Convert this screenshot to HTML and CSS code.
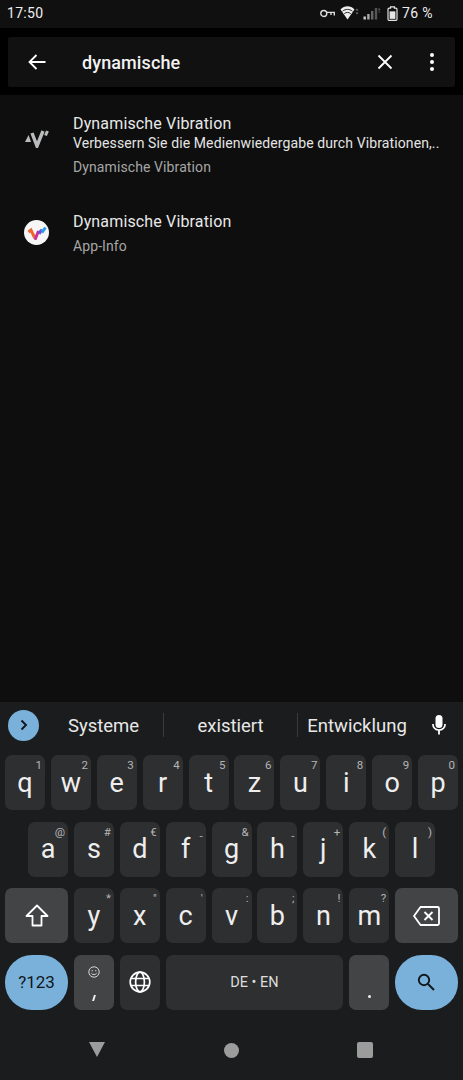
FILE: index.html
```html
<!DOCTYPE html>
<html lang="de">
<head>
    <meta charset="UTF-8" />
    <meta name="viewport" content="width=device-width, initial-scale=1.0" />
    <title>Einstellungen suchen</title>
    <link rel="stylesheet" href="styles.css">
</head>
<body>
    <div class="status-bar">
        <span class="clock">17:50</span>
        <div class="status-icons">
            <svg class="icon-key" width="15" height="9" viewBox="0 0 15 9" fill="none" stroke="#ddd" stroke-width="1.4">
                <circle cx="3.8" cy="4.5" r="3"/>
                <path d="M6.8 3.4H14.3V6.6M11 3.4V6"/>
            </svg>
            <svg class="icon-wifi" width="19" height="14" viewBox="0 0 19 14">
                <path d="M0.5 3.5C4.5-0.8 10.5-0.8 14.5 3.5L7.5 13.5Z" fill="#eee"/>
                <path d="M2.6 5.2C5.5 2.8 9.5 2.8 12.4 5.2M4.3 7.6C6.2 6 8.8 6 10.7 7.6" stroke="#111" stroke-width="0.9" fill="none"/>
                <path d="M17 2.5L18.5 4.5H15.5ZM17 8.5L18.5 6.5H15.5Z" fill="#777"/>
            </svg>
            <svg class="icon-signal" width="18" height="13" viewBox="0 0 18 13">
                <rect x="0.5" y="9.5" width="2.4" height="3" fill="#ccc"/>
                <rect x="4.2" y="7" width="2.4" height="5.5" fill="#aaa"/>
                <rect x="8" y="4" width="2.4" height="8.5" fill="#666"/>
                <rect x="11.8" y="1" width="2.4" height="11.5" fill="#555"/>
                <path d="M16.2 1.5V6M15.2 3L16.2 1.5L17.2 3" stroke="#555" stroke-width="0.8" fill="none"/>
            </svg>
            <svg class="icon-battery" width="11" height="15" viewBox="0 0 10 14">
                <path d="M3.2 0.8H6.8V2H8.2Q9.2 2 9.2 3V12.4Q9.2 13.4 8.2 13.4H1.8Q0.8 13.4 0.8 12.4V3Q0.8 2 1.8 2H3.2Z" fill="none" stroke="#e6e6e6" stroke-width="1.1"/>
                <rect x="2.3" y="5" width="5.4" height="7" fill="#e6e6e6"/>
            </svg>
            <span class="battery-text">76 %</span>
        </div>
    </div>

    <div class="search-wrap">
        <div class="search-box">
            <svg class="search-back" width="18" height="16" viewBox="0 0 18 16" fill="none" stroke="#fff" stroke-width="1.8">
                <path d="M17.5 8H1.5M8.5 1L1.5 8L8.5 15"/>
            </svg>
            <span class="search-text">dynamische</span>
            <svg class="search-clear" width="16" height="16" viewBox="0 0 16 16" fill="none" stroke="#fff" stroke-width="1.8">
                <path d="M1.5 1.5L14.5 14.5M14.5 1.5L1.5 14.5"/>
            </svg>
            <div class="search-more"><span></span><span></span><span></span></div>
        </div>
    </div>

    <div class="results">
        <div class="result result-first">
            <div class="result-icon">
                <svg width="26" height="19" viewBox="0 0 26 19" fill="none" stroke="#b9bbbd">
                    <path d="M1 13L4.6 6L7 13Z" fill="#b9bbbd" stroke="none"/>
                    <path d="M8 4L13 17L19 2" stroke-width="3.4"/>
                    <path d="M21.5 6.5L23.5 2" stroke-width="3"/>
                </svg>
            </div>
            <div class="result-text">
                <div class="result-title">Dynamische Vibration</div>
                <div class="result-desc">Verbessern Sie die Medienwiedergabe durch Vibrationen,..</div>
                <div class="result-path">Dynamische Vibration</div>
            </div>
        </div>
        <div class="result result-second">
            <div class="result-icon">
                <div class="app-logo">
                    <svg width="20" height="14" viewBox="0 0 20 14" fill="none" stroke-width="3">
                        <path d="M1.5 6L4 4L7.5 11.5" stroke="#f0642d"/>
                        <path d="M7.5 11.5L8.5 12.5L11.5 5" stroke="#c6339a"/>
                        <path d="M11.5 5L13 6.5L15 3.5" stroke="#6a4fd8"/>
                        <path d="M15 3.5L16 5L18.5 1.5" stroke="#2b9cf0"/>
                    </svg>
                </div>
            </div>
            <div class="result-text">
                <div class="result-title">Dynamische Vibration</div>
                <div class="result-path result-path-app">App-Info</div>
            </div>
        </div>
    </div>

    <div class="keyboard">
        <div class="suggestions">
            <div class="expand-btn">
                <svg width="8" height="12" viewBox="0 0 8 12" fill="none" stroke="#10171c" stroke-width="1.9">
                    <path d="M1.5 1.5L6 6L1.5 10.5"/>
                </svg>
            </div>
            <span class="word word-1">Systeme</span>
            <span class="word-sep"></span>
            <span class="word word-2">existiert</span>
            <span class="word-sep"></span>
            <span class="word word-3">Entwicklung</span>
            <svg class="mic" width="14" height="20" viewBox="0 0 14 20" fill="none" stroke="#fff">
                <rect x="3.5" y="0" width="7" height="13" rx="3.5" fill="#fff" stroke="none"/>
                <path d="M0.9 9C0.9 12.6 3.6 15 7 15C10.4 15 13.1 12.6 13.1 9" stroke-width="1.7"/>
                <path d="M7 15V19.5" stroke-width="1.8"/>
            </svg>
        </div>

        <div class="key-row">
            <div class="key"><span class="hint">1</span>q</div>
            <div class="key"><span class="hint">2</span>w</div>
            <div class="key"><span class="hint">3</span>e</div>
            <div class="key"><span class="hint">4</span>r</div>
            <div class="key"><span class="hint">5</span>t</div>
            <div class="key"><span class="hint">6</span>z</div>
            <div class="key"><span class="hint">7</span>u</div>
            <div class="key"><span class="hint">8</span>i</div>
            <div class="key"><span class="hint">9</span>o</div>
            <div class="key"><span class="hint">0</span>p</div>
        </div>

        <div class="key-row key-row-home">
            <div class="key"><span class="hint">@</span>a</div>
            <div class="key"><span class="hint">#</span>s</div>
            <div class="key"><span class="hint">€</span>d</div>
            <div class="key"><span class="hint hint-dash">-</span>f</div>
            <div class="key"><span class="hint">&amp;</span>g</div>
            <div class="key"><span class="hint hint-dash">-</span>h</div>
            <div class="key"><span class="hint">+</span>j</div>
            <div class="key"><span class="hint">(</span>k</div>
            <div class="key"><span class="hint">)</span>l</div>
        </div>

        <div class="key-row">
            <div class="key key-wide key-dark">
                <svg width="24" height="23" viewBox="0 0 24 23" fill="none" stroke="#fff" stroke-width="1.8">
                    <path d="M12 1.5L22.5 12H16.5V21.5H7.5V12H1.5Z" stroke-linejoin="round"/>
                </svg>
            </div>
            <div class="key"><span class="hint">*</span>y</div>
            <div class="key"><span class="hint">"</span>x</div>
            <div class="key"><span class="hint">'</span>c</div>
            <div class="key"><span class="hint">:</span>v</div>
            <div class="key"><span class="hint">;</span>b</div>
            <div class="key"><span class="hint">!</span>n</div>
            <div class="key"><span class="hint">?</span>m</div>
            <div class="key key-wide key-dark">
                <svg width="27" height="20" viewBox="0 0 27 20" fill="none" stroke="#fff" stroke-width="1.8">
                    <path d="M7.5 1H24.5Q26 1 26 2.5V17.5Q26 19 24.5 19H7.5L1 10Z" stroke-linejoin="round"/>
                    <path d="M11.5 6L19.5 14M19.5 6L11.5 14"/>
                </svg>
            </div>
        </div>

        <div class="key-row key-row-bottom">
            <div class="key key-wide key-action key-symbols">?123</div>
            <div class="key key-dark key-comma">
                <svg class="emoji" width="12" height="12" viewBox="0 0 12 12" fill="none" stroke="#e6e6e6" stroke-width="0.9">
                    <circle cx="6" cy="6" r="5.2"/>
                    <circle cx="4.2" cy="4.7" r="0.6" fill="#e6e6e6" stroke="none"/>
                    <circle cx="7.8" cy="4.7" r="0.6" fill="#e6e6e6" stroke="none"/>
                    <path d="M3.3 7.2C4.2 9 7.8 9 8.7 7.2"/>
                </svg>
                <span class="comma"></span>
            </div>
            <div class="key">
                <svg width="22" height="22" viewBox="0 0 22 22" fill="none" stroke="#fff" stroke-width="1.7">
                    <circle cx="11" cy="11" r="9.8"/>
                    <ellipse cx="11" cy="11" rx="4.4" ry="9.8"/>
                    <path d="M2 7.5H20M2 14.5H20"/>
                </svg>
            </div>
            <div class="key key-space">DE • EN</div>
            <div class="key key-dark key-period"><span class="dot"></span></div>
            <div class="key key-wide key-action">
                <svg width="18" height="18" viewBox="0 0 18 18" fill="none" stroke="#10171c" stroke-width="1.9">
                    <circle cx="7" cy="7" r="5.2"/>
                    <path d="M11 11L17 17"/>
                </svg>
            </div>
        </div>

        <div class="nav-bar">
            <span class="nav-back"></span>
            <span class="nav-home"></span>
            <span class="nav-recent"></span>
        </div>
    </div>
</body>
</html>
```

FILE: styles.css
```css
* {
    margin: 0;
    padding: 0;
    box-sizing: border-box;
}

body {
    font-family: Roboto, sans-serif;
    background-color: #0e0e0e;
    color: #fff;
    height: 1080px;
    overflow: hidden;
    display: flex;
    flex-direction: column;
}

.status-bar {
    height: 28px;
    background: #101010;
    display: flex;
    align-items: center;
    justify-content: space-between;
    padding: 0 30px 2px 7px;
    font-size: 14px;
    color: #eee;
}

.clock {
    letter-spacing: 0.3px;
}

.status-icons {
    display: flex;
    align-items: center;
}

.icon-key {
    margin-right: 5px;
}

.icon-wifi {
    margin-right: 4px;
}

.icon-battery {
    margin-left: 6px;
}

.battery-text {
    margin-left: 4px;
    letter-spacing: 0.4px;
}

.search-wrap {
    background: #000;
    padding: 9px 8px 8px;
}

.search-box {
    height: 50px;
    background: #111;
    border-radius: 2px;
    display: flex;
    align-items: center;
    padding: 0 21px 0 20px;
}

.search-back {
    flex-shrink: 0;
}

.search-text {
    flex: 1;
    margin-left: 36px;
    font-size: 18px;
    font-weight: 500;
    letter-spacing: 0.1px;
    color: #f2f2f2;
}

.search-clear {
    margin-right: 37px;
}

.search-more {
    display: flex;
    flex-direction: column;
    gap: 3px;
}

.search-more span {
    width: 4px;
    height: 4px;
    border-radius: 50%;
    background: #fff;
}

.results {
    flex: 1;
    padding-top: 19px;
}

.result {
    display: flex;
}

.result-first {
    height: 98px;
}

.result-icon {
    width: 73px;
    padding-left: 24px;
    flex-shrink: 0;
}

.result-first .result-icon {
    padding-top: 15px;
}

.result-second .result-icon {
    padding-top: 8px;
}

.app-logo {
    width: 25px;
    height: 25px;
    border-radius: 50%;
    background: #f6f6f6;
    display: flex;
    align-items: center;
    justify-content: center;
}

.result-title {
    font-size: 16px;
    line-height: 19px;
    letter-spacing: 0.15px;
    color: #e8e8e8;
}

.result-desc {
    font-size: 14px;
    line-height: 20px;
    letter-spacing: 0.11px;
    color: #e4e4e4;
}

.result-path {
    font-size: 14px;
    line-height: 20px;
    letter-spacing: 0.1px;
    margin-top: 4px;
    color: #a6a6a6;
}

.result-path-app {
    margin-top: 5px;
}

.keyboard {
    background: #1b1c1e;
    height: 378px;
    display: flex;
    flex-direction: column;
}

.suggestions {
    height: 53px;
    display: flex;
    align-items: center;
    padding: 0 0 7px 8px;
}

.expand-btn {
    width: 31px;
    height: 31px;
    border-radius: 50%;
    background: #7ab1da;
    display: flex;
    align-items: center;
    justify-content: center;
    flex-shrink: 0;
}

.word {
    font-size: 18.5px;
    color: #e8e8e8;
    text-align: center;
    padding-top: 2px;
}

.word-1 {
    width: 124px;
    padding-left: 5px;
}

.word-2 {
    width: 133px;
}

.word-3 {
    width: 118px;
}

.word-sep {
    width: 1px;
    height: 24px;
    background: #3a3b3d;
}

.mic {
    margin-left: 16px;
}

.key-row {
    display: flex;
    gap: 5.9px;
    padding: 0 5px;
    margin-bottom: 11.5px;
}

.key-row-home {
    padding-left: 28px;
}

.key {
    position: relative;
    width: 40px;
    height: 55px;
    flex-shrink: 0;
    background: #2e2f31;
    border-radius: 7px;
    display: flex;
    align-items: center;
    justify-content: center;
    font-size: 27px;
    color: #eee;
}

.hint {
    position: absolute;
    top: 3px;
    right: 3px;
    font-size: 11.5px;
    line-height: 14px;
    color: #b5b5b5;
}

.hint-dash {
    top: 7px;
}

.key-wide {
    width: 63px;
}

.key-dark {
    background: #434446;
}

.key-action {
    background: #7ab1da;
    border-radius: 27px;
    color: #10171c;
}

.key-symbols {
    font-size: 17px;
}

.key-comma {
    flex-direction: column;
    justify-content: flex-start;
    padding-top: 11px;
}

.comma {
    width: 2px;
    height: 6px;
    margin-top: 17px;
    background: #eee;
    transform: skewX(-18deg);
}

.key-space {
    width: 177.5px;
    font-size: 14.5px;
    color: #ddd;
    padding-top: 1px;
}

.key-period {
    align-items: flex-end;
    padding-bottom: 12px;
}

.dot {
    width: 3px;
    height: 3px;
    border-radius: 50%;
    background: #eee;
}

.nav-bar {
    flex: 1;
    display: flex;
    align-items: flex-start;
    padding-top: 21px;
}

.nav-back {
    margin-left: 89px;
    width: 0;
    height: 0;
    border-left: 8.5px solid transparent;
    border-right: 8.5px solid transparent;
    border-top: 15px solid #9c9c9c;
}

.nav-home {
    margin-left: 118.5px;
    width: 15px;
    height: 15px;
    border-radius: 50%;
    background: #9c9c9c;
    margin-top: 1px;
}

.nav-recent {
    margin-left: 118.5px;
    width: 16px;
    height: 16px;
    border-radius: 2px;
    background: #9c9c9c;
}
```
